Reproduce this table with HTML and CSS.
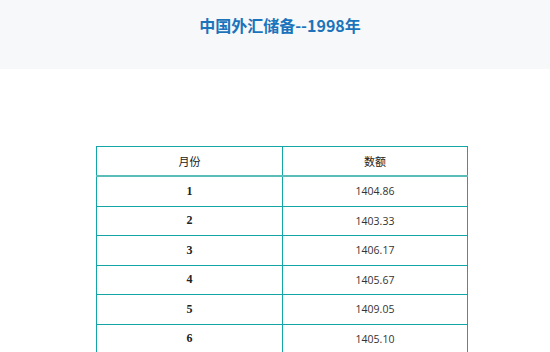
FILE: index.html
```html
<!DOCTYPE html>
<html>
<head>
<meta charset="utf-8">
<link rel="stylesheet" href="styles.css">
</head>
<body>
<header class="top">
  <h1 class="title">中国外汇储备--1998年</h1>
</header>
<main class="wrap">
  <table class="data">
    <thead>
      <tr><th class="c-month">月份</th><th class="c-val">数额</th></tr>
    </thead>
    <tbody>
      <tr><td class="c-month">1</td><td class="c-val">1404.86</td></tr>
      <tr><td class="c-month">2</td><td class="c-val">1403.33</td></tr>
      <tr><td class="c-month">3</td><td class="c-val">1406.17</td></tr>
      <tr><td class="c-month">4</td><td class="c-val">1405.67</td></tr>
      <tr><td class="c-month">5</td><td class="c-val">1409.05</td></tr>
      <tr><td class="c-month">6</td><td class="c-val">1405.10</td></tr>
    </tbody>
  </table>
</main>
</body>
</html>
```

FILE: styles.css
```css
html, body {
  margin: 0;
  padding: 0;
  background: #fff;
}
.top {
  height: 69px;
  background: #f7f8f9;
  display: flex;
  justify-content: center;
  padding-top: 14px;
  box-sizing: border-box;
}
.title {
  margin: 0 0 0 10px;
  font-family: "Noto Sans CJK SC", "Open Sans", sans-serif;
  font-size: 16px;
  font-weight: 700;
  color: #1b74bb;
  line-height: 22px;
}
.wrap {
  padding: 77px 0 0 96px;
}
.data {
  width: 372px;
  border-collapse: collapse;
  border: 1px solid #13a6a6;
  font-size: 11px;
  color: #222;
}
.data th, .data td {
  border: 1px solid #13a6a6;
  text-align: center;
  padding: 0;
}
.data th {
  height: 28px;
  font-family: "Noto Sans CJK SC", serif;
  font-weight: 400;
  border-bottom: 2px solid #5bbdb8;
}
.data td {
  height: 28.5px;
}
.c-month {
  width: 185px;
}
td.c-month {
  font-family: "Liberation Serif", serif;
  font-weight: 700;
  font-size: 12px;
}
td.c-val {
  font-family: "Open Sans", "Liberation Sans", sans-serif;
  font-size: 10.5px;
  color: #333;
}
```
